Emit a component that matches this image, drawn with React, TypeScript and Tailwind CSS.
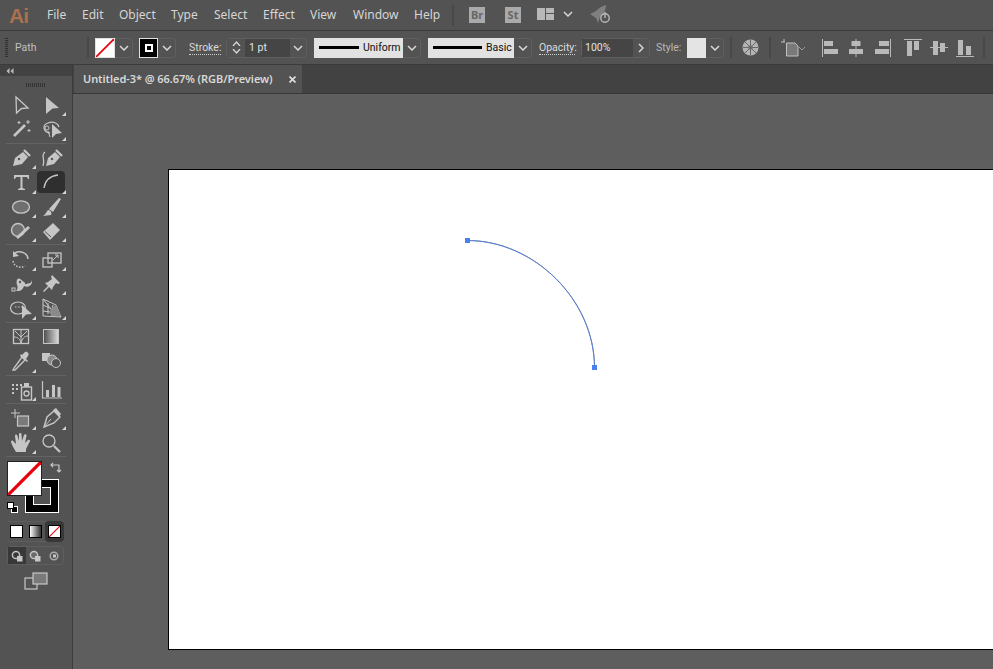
const menus = ["File", "Edit", "Object", "Type", "Select", "Effect", "View", "Window", "Help"]

const Chevron = ({ color = "#d8d8d8" }: { color?: string }) => (
  <svg width="10" height="6" viewBox="0 0 10 6" fill="none" stroke={color} strokeWidth="1.5">
    <path d="M1 1 L5 5 L9 1" />
  </svg>
)

const Drop = ({ w = "w-[18px]" }: { w?: string }) => (
  <div className={`h-[20px] ${w} flex items-center justify-center border border-l-0 border-[#5f5f5f] rounded-r-sm bg-[#535353]`}>
    <Chevron />
  </div>
)

const Sep = ({ className = "" }: { className?: string }) => (
  <div className={`w-[2px] h-[21px] bg-[#484848] ${className}`} />
)

const Line = ({ w }: { w: string }) => <div className={`${w} h-[3px] bg-black`} />

const c = "#c6c6c6"

const Tool = ({ active, corner = true, children }: { active?: boolean; corner?: boolean; children: React.ReactNode }) => (
  <div className="relative w-[30px] h-[24.4px]">
    {active && <div className="absolute left-0 top-[1px] w-[28px] h-[22px] rounded-sm bg-[#2f2f2f]" />}
    <svg width="30" height="24" viewBox="0 0 30 24" fill="none" className="block relative">{children}</svg>
    {corner && (
      <svg width="4" height="4" viewBox="0 0 4 4" className="absolute right-[1px] bottom-[1px]">
        <path d="M4 0 L4 4 L0 4 Z" fill="#d4d4d4" />
      </svg>
    )}
  </div>
)

const toolGroups: { icon: React.ReactNode; active?: boolean; corner?: boolean }[][] = [
  [
    { corner: false, icon: <path d="M9 4 L21 15 L14.5 15.5 L9.5 20 Z" stroke={c} strokeWidth="1.3" /> },
    { icon: <path d="M9 4 L22 15 L15.5 15.5 L9 21 Z" fill={c} /> },
    { corner: false, icon: <><path d="M7 19 L18 8" stroke={c} strokeWidth="2.6" /><path d="M21 3 v4 M19 5 h4 M12 4 v3 M10.5 5.5 h3 M22 12 v3 M20.5 13.5 h3" stroke={c} /></> },
    { icon: <><path d="M13 16 C6 15 5 8 11 6 C16 4 21 6 22 10" stroke={c} strokeWidth="1.3" /><path d="M15 7 L25 16 L19 17 L15 21 Z" fill={c} /><circle cx="10" cy="11" r="2" stroke={c} /><path d="M11 14 L13 20" stroke={c} /></> },
  ],
  [
    { icon: <><path d="M6 20 L8 12 L16 6 L21 11 L15 18 Z" fill={c} /><path d="M17 4 L23 10" stroke={c} strokeWidth="2.4" /><circle cx="12" cy="13" r="1.2" fill="#535353" /></> },
    { corner: false, icon: <><path d="M9 20 L11 12 L18 6 L23 11 L17 18 Z" fill={c} /><path d="M19 4 L25 10" stroke={c} strokeWidth="2.4" /><path d="M8 6 C3 10 9 13 6 20 " stroke={c} strokeWidth="1.3" /><circle cx="15" cy="13" r="1.2" fill="#535353" /></> },
    { icon: <path d="M7 5 H22 V9 H21 L20 7 H15.5 V18 L18 19 V20 H11 V19 L13.5 18 V7 H9 L8 9 H7 Z" fill={c} /> },
    { active: true, icon: <path d="M7 18 C8 11 13 6 21 5" stroke={c} strokeWidth="1.3" /> },
    { icon: <ellipse cx="14" cy="12" rx="8.5" ry="6.2" fill="#6f6f6f" stroke={c} strokeWidth="1.3" /> },
    { icon: <><path d="M12 14 L22 3 L24 4 L16 17 Z" fill={c} /><path d="M11 15 C14 15 15 18 14 20 L6 21 C9 19 9 17 11 15 Z" fill={c} /></> },
    { icon: <><circle cx="11" cy="11" r="6.5" fill="#6f6f6f" stroke={c} strokeWidth="1.4" /><path d="M10 19 L22 8" stroke={c} strokeWidth="3" /></> },
    { icon: <><path d="M6 13 L16 4 L23 11 L13 21 Z" fill={c} /><path d="M8 12.5 L14 18" stroke="#535353" /></> },
  ],
  [
    { icon: <><path d="M8 5 C13 2 21 5 21 11" stroke={c} strokeWidth="1.5" /><path d="M6 3 L6 9 L12 8 Z" fill={c} /><path d="M6 13 C7 18 12 21 18 18" stroke={c} strokeWidth="1.5" strokeDasharray="1.5 1.5" /></> },
    { icon: <><rect x="6" y="10" width="9" height="9" stroke={c} strokeWidth="1.3" /><rect x="11" y="5" width="13" height="10" stroke={c} strokeWidth="1.3" /><path d="M16 12 L21 7 M18 7 H21 V10" stroke={c} /></> },
    { icon: <><path d="M9 19 C13 15 8 12 10 8 C12 4 15 9 17 10 C21 13 25 11 25 8 C26 14 20 16 17 14 C15 19 13 19 9 19 Z" fill={c} /><rect x="5" y="16" width="3" height="3" stroke={c} /><circle cx="13" cy="10" r="1.2" fill="#535353" /><circle cx="19" cy="11" r="1.2" fill="#535353" /></> },
    { icon: <><path d="M15 3 L23 11 L21 12 L19 11 L16 15 L15 18 L12 15 L7 20 L6 19 L11 14 L8 11 L11 10 L15 7 L14 5 Z" fill={c} /></> },
    { icon: <><ellipse cx="11" cy="12" rx="7.5" ry="6" stroke={c} strokeWidth="1.2" /><path d="M8 11 h7" stroke={c} strokeDasharray="1.5 1.5" /><path d="M15 9 L25 18 L19 18.5 L15 23 Z" fill={c} /></> },
    { icon: <><path d="M6 3 V20 L24 21 L14 13 Z M6 3 L19 9 L24 21 M6 9 L15 13 M6 15 L20 17 M11 7 V18 M16 9 L14 18" stroke={c} strokeWidth="1" /><path d="M13 13 L19 9 L24 20 L14 20 Z" fill="#8a8a8a" /></> },
  ],
  [
    { corner: false, icon: <><rect x="6.5" y="4.5" width="15" height="14" stroke={c} strokeWidth="1.3" /><path d="M7 12 C11 12 13 14 14 18 M21 11 C17 11 15 14 14 18 M14 18 V5 M8 6 C10 8 12 10 14 12 M20 6 C18 8 16 10 14 12" stroke={c} /></> },
    { corner: false, icon: <><defs><linearGradient id="grad"><stop offset="0" stopColor="#4c4c4c" /><stop offset="1" stopColor="#dcdcdc" /></linearGradient></defs><rect x="6.5" y="4.5" width="15" height="14" fill="url(#grad)" stroke={c} strokeWidth="1" /></> },
    { icon: <><path d="M7 19 L6 21 L8 21 L18 11 L15 8 Z" stroke={c} strokeWidth="1.4" /><path d="M15 6 L18 3 C20 2 23 5 21 7 L19 10 L21 12 L20 13 L13 7 L14 5 Z" fill={c} /></> },
    { corner: false, icon: <><rect x="5" y="4" width="8" height="8" fill={c} /><circle cx="15" cy="11" r="5" fill="#8a8a8a" stroke={c} /><circle cx="19" cy="14" r="4.5" fill="#535353" stroke={c} /></> },
  ],
  [
    { icon: <><path d="M5 6 h2 v2 h-2 z M9 6 h2 v2 h-2 z M13 6 h2 v2 h-2 z M5 10 h2 v2 h-2 z M9 10 h2 v2 h-2 z M5 14 h2 v2 h-2 z" fill={c} /><rect x="14.5" y="9" width="10" height="13" fill="#535353" stroke={c} strokeWidth="1.4" /><rect x="17" y="5" width="5" height="4" fill={c} /><circle cx="19.5" cy="15.5" r="2.5" stroke={c} strokeWidth="1.3" /></> },
    { corner: false, icon: <><path d="M5.5 3 V20 H25" stroke={c} strokeWidth="1.2" /><path d="M9 12 h3 v7 h-3 z M15 7 h3 v12 h-3 z M20.5 9 h3 v10 h-3 z" fill={c} /></> },
  ],
  [
    { icon: <><rect x="10.5" y="10" width="11" height="10" fill="#7a7a7a" stroke={c} strokeWidth="1.2" /><path d="M4 7 H13 M8 3 V12" stroke={c} strokeWidth="1" /></> },
    { icon: <><path d="M7 21 L10 11 L17 5 L23 11 L17 17 Z" stroke={c} strokeWidth="1.4" /><path d="M16 4 L19 2 L24 8 L22 11 Z" fill={c} /><path d="M7 21 L14 13" stroke={c} /></> },
    { icon: <path d="M9 21 C7 18 5 14 4 11 C4 9 6 9 7 11 L9 13 L8 5 C8 3 10 3 10.5 5 L12 10 L12 3 C12 1.5 14.5 1.5 14.5 3 L15 10 L17 4 C17.5 2.5 20 3 19.5 5 L18 12 L21 9 C23 8 24 10 22 12 L19 18 V21 Z" fill={c} /> },
    { corner: false, icon: <><circle cx="12" cy="10" r="6" stroke={c} strokeWidth="1.3" /><path d="M17 15 L23 21" stroke={c} strokeWidth="2.2" /></> },
  ],
]

const Swatch = () => (
  <svg width="100%" height="100%" viewBox="0 0 20 20" preserveAspectRatio="none" className="block">
    <rect width="20" height="20" fill="#fff" />
    <path d="M0 20 L20 0" stroke="#e8000d" strokeWidth="2" />
  </svg>
)

const Toolbar = () => (
  <div className="w-[73px] shrink-0 bg-[#535353] border-r border-[#3c3c3c] flex flex-col">
    <div className="h-[11px] bg-[#424242] flex items-center pl-[6px]">
      <svg width="8" height="6" viewBox="0 0 8 6"><path d="M3.5 0 L0.5 3 L3.5 6 Z M7.5 0 L4.5 3 L7.5 6 Z" fill="#bcbcbc" /></svg>
    </div>
    <div className="h-[17px] flex items-center justify-center pr-[2px]">
      <div className="w-[19px] h-[4px] bg-[repeating-linear-gradient(90deg,#333_0,#333_1px,transparent_1px,transparent_2px)]" />
    </div>
    {toolGroups.map((group, i) => (
      <div key={i} className="border-b border-[#636363] mx-[6px] pb-[1px] mb-[2.1px]">
        <div className="grid grid-cols-[30px_30px] ml-[1px]">
          {group.map((t, j) => (
            <Tool key={j} active={t.active} corner={t.corner !== false}>{t.icon}</Tool>
          ))}
        </div>
      </div>
    ))}

    {/* fill + stroke */}
    <div className="relative h-[60px] mx-[7px] mt-[2px]">
      <div className="absolute left-[18px] top-[18px] w-[34px] h-[34px] bg-black border border-white flex items-center justify-center">
        <div className="w-[18px] h-[18px] bg-[#535353] border border-white" />
      </div>
      <div className="absolute left-0 top-0 w-[35px] h-[35px] border border-[#222]">
        <Swatch />
      </div>
      <svg width="12" height="12" viewBox="0 0 12 12" fill="none" stroke="#c6c6c6" strokeWidth="1.2" className="absolute left-[43px] top-[1px]">
        <path d="M1 3 H9 V10 M3 1 L1 3 L3 5 M7 8 L9 10 L11 8" />
      </svg>
      <div className="absolute left-0 top-[41px] w-[11px] h-[11px]">
        <div className="absolute left-[4px] top-[4px] w-[7px] h-[7px] bg-black border border-white" />
        <div className="absolute left-0 top-0 w-[7px] h-[7px] bg-white border border-black" />
      </div>
    </div>

    <div className="ml-[7px] w-[57px] h-[21px] border-y border-[#5e5e5e] flex items-center">
      <div className="w-[19px] flex justify-center"><div className="w-[13px] h-[13px] bg-white border border-black" /></div>
      <div className="w-[19px] flex justify-center"><div className="w-[13px] h-[13px] border border-black bg-gradient-to-r from-white to-[#333]" /></div>
      <div className="w-[19px] h-[21px] rounded-sm bg-[#383838] flex items-center justify-center">
        <div className="w-[13px] h-[13px] border border-black"><Swatch /></div>
      </div>
    </div>

    <div className="ml-[7px] w-[57px] mt-[4px] h-[19px] flex border border-[#5e5e5e] rounded-sm">
      <div className="w-[19px] bg-[#383838] flex items-center justify-center">
        <svg width="12" height="12" viewBox="0 0 12 12"><circle cx="5" cy="5" r="3.6" fill="none" stroke="#c6c6c6" strokeWidth="1.5" /><rect x="6" y="6" width="5.5" height="5.5" fill="#c6c6c6" /></svg>
      </div>
      <div className="w-[19px] flex items-center justify-center">
        <svg width="12" height="12" viewBox="0 0 12 12"><circle cx="5" cy="5" r="3.6" fill="#6a6a6a" stroke="#c6c6c6" strokeWidth="1.5" /><rect x="6" y="6" width="5.5" height="5.5" fill="#c6c6c6" /></svg>
      </div>
      <div className="w-[19px] flex items-center justify-center">
        <svg width="12" height="12" viewBox="0 0 12 12"><circle cx="6" cy="6" r="3.8" fill="none" stroke="#aaa" strokeWidth="1.5" /><rect x="5" y="4.5" width="3" height="3" fill="#c6c6c6" /></svg>
      </div>
    </div>

    <div className="flex justify-center mt-[7px] pr-[1px]">
      <svg width="24" height="18" viewBox="0 0 24 18" fill="none" stroke="#c6c6c6" strokeWidth="1.2">
        <rect x="1" y="6" width="12" height="11" />
        <rect x="9" y="1" width="14" height="11" fill="#7a7a7a" />
      </svg>
    </div>
  </div>
)

const AlignIcon = ({ children, w = 18, className = "" }: { children: React.ReactNode; w?: number; className?: string }) => (
  <svg width={w} height="18" viewBox={`0 0 ${w} 18`} fill="#b9b9b9" className={`block shrink-0 ${className}`}>{children}</svg>
)

const ControlBar = () => (
  <div className="h-[35px] shrink-0 bg-[#535353] border-y border-[#3b3b3b] flex items-center text-[10.5px] text-[#cfcfcf] font-['Roboto',sans-serif] [&>*]:shrink-0">
    <div className="ml-[5px] w-[3px] h-[19px] bg-[repeating-linear-gradient(180deg,#2f2f2f_0,#2f2f2f_1px,transparent_1px,transparent_2px)]" />
    <span className="ml-[7px] w-[72px] text-[#c0c0c0]">Path</span>
    <Sep />
    <div className="ml-[6px] w-[20px] h-[20px] border border-[#e0e0e0]"><Swatch /></div>
    <Drop />
    <div className="ml-[6px] w-[19px] h-[20px] bg-black border border-[#e0e0e0] flex items-center justify-center">
      <div className="w-[8px] h-[8px] border-2 border-white" />
    </div>
    <Drop />
    <span className="ml-[13px] w-[32px] border-b border-dotted border-[#d0d0d0] leading-[13px] text-[#d8d8d8] whitespace-nowrap">Stroke:</span>
    <div className="ml-[5px] h-[20px] w-[81px] flex border border-[#5f5f5f] rounded-sm">
      <div className="w-[18px] flex flex-col items-center justify-center gap-[3px] bg-[#535353]">
        <svg width="9" height="5" viewBox="0 0 9 5" fill="none" stroke="#d8d8d8" strokeWidth="1.3"><path d="M1 5 L4.5 1 L8 5" /></svg>
        <svg width="9" height="5" viewBox="0 0 9 5" fill="none" stroke="#d8d8d8" strokeWidth="1.3"><path d="M1 0 L4.5 4 L8 0" /></svg>
      </div>
      <div className="w-[45px] bg-[#454545] pl-[4px] leading-[18px] text-[#e2e2e2]">1 pt</div>
      <div className="flex-1 flex items-center justify-center"><Chevron /></div>
    </div>
    <div className="ml-[7px] w-[89px] h-[20px] bg-[#e2e2e2] flex items-center pl-[5px] text-[#111]">
      <Line w="w-[40px]" />
      <span className="ml-[4px]">Uniform</span>
    </div>
    <Drop />
    <div className="ml-[7px] w-[86px] h-[20px] bg-[#e2e2e2] flex items-center pl-[5px] text-[#111]">
      <Line w="w-[49px]" />
      <span className="ml-[4px]">Basic</span>
    </div>
    <Drop />
    <span className="ml-[7px] w-[36px] border-b border-dotted border-[#d0d0d0] leading-[13px] text-[#dcdcdc] whitespace-nowrap">Opacity:</span>
    <div className="ml-[6px] h-[20px] w-[69px] flex border border-[#5f5f5f] rounded-sm">
      <div className="w-[51px] bg-[#454545] pl-[3px] leading-[18px] text-[#e2e2e2]">100%</div>
      <div className="flex-1 flex items-center justify-center">
        <svg width="6" height="10" viewBox="0 0 6 10" fill="none" stroke="#d8d8d8" strokeWidth="1.5"><path d="M1 1 L5 5 L1 9" /></svg>
      </div>
    </div>
    <span className="ml-[6px] w-[25px] text-[#b8b8b8]">Style:</span>
    <div className="ml-[6px] w-[19px] h-[20px] bg-[#e4e4e4]" />
    <Drop />
    <Sep className="ml-[6px]" />
    <svg width="17" height="17" viewBox="0 0 17 17" fill="none" className="ml-[10px]">
      <circle cx="8.5" cy="8.5" r="8" fill="#b4b4b4" />
      <circle cx="8.5" cy="8.5" r="2.5" fill="#8a8a8a" />
      <path d="M8.5 1 V16 M1 8.5 H16 M3 3 L14 14 M14 3 L3 14" stroke="#6a6a6a" />
    </svg>
    <Sep className="ml-[10px]" />
    <svg width="25" height="18" viewBox="0 0 25 18" fill="none" className="ml-[10px]">
      <path d="M5.5 4 H14 L17 7 V17 H5.5 Z" fill="#7a7a7a" stroke="#c0c0c0" />
      <path d="M0 3 H4 M3 0 V3" stroke="#c0c0c0" />
      <path d="M18 8 L21 11 L24 8" stroke="#999" />
    </svg>
    <AlignIcon w={16} className="ml-[16px]"><rect x="0" y="0" width="1" height="18" /><rect x="2" y="2" width="9" height="5" /><rect x="2" y="10" width="14" height="5" /></AlignIcon>
    <AlignIcon w={14} className="ml-[11px]"><rect x="6.5" y="0" width="1" height="18" /><rect x="2.5" y="2" width="9" height="5" /><rect x="0" y="10" width="14" height="5" /></AlignIcon>
    <AlignIcon w={16} className="ml-[12px]"><rect x="15" y="0" width="1" height="18" /><rect x="4" y="2" width="10" height="5" /><rect x="0" y="10" width="14" height="5" /></AlignIcon>
    <AlignIcon w={18} className="ml-[13px]"><rect x="0" y="0" width="18" height="1" /><rect x="3" y="2" width="5" height="15" /><rect x="10" y="2" width="5" height="9" /></AlignIcon>
    <AlignIcon w={18} className="ml-[8px]"><rect x="0" y="8" width="18" height="1" /><rect x="3" y="2" width="5" height="14" /><rect x="10" y="4" width="5" height="9" /></AlignIcon>
    <AlignIcon w={18} className="ml-[8px]"><rect x="0" y="17" width="18" height="1" /><rect x="2" y="1" width="5" height="15" /><rect x="10" y="7" width="5" height="9" /></AlignIcon>
    <Sep className="ml-[9px]" />
  </div>
)

const MenuBar = () => (
  <div className="h-[30px] shrink-0 bg-[#535353] flex items-center text-[12px] text-[#d6d6d6]">
    <span className="ml-[9px] w-[38px] text-[21px] leading-none font-bold tracking-[-1px] text-[#a9714f] font-['Liberation_Sans',sans-serif]">Ai</span>
    <div className="flex">
      {menus.map((m, i) => (
        <span key={m} className={["w-[35px]", "w-[37px]", "w-[52px]", "w-[43px]", "w-[49px]", "w-[47px]", "w-[43px]", "w-[61px]", "w-[38px]"][i]}>{m}</span>
      ))}
    </div>
    <Sep />
    <div className="ml-[15px] w-[16px] h-[16px] bg-[#aaa] text-[11px] font-bold text-[#666] flex items-center justify-center">Br</div>
    <div className="ml-[20px] w-[16px] h-[16px] bg-[#aaa] text-[11px] font-bold text-[#666] flex items-center justify-center">St</div>
    <svg width="18" height="12" viewBox="0 0 18 12" fill="#b8b8b8" className="ml-[16px] mb-[3px]">
      <rect width="8" height="12" /><rect x="9" width="8" height="5" /><rect x="9" y="6" width="8" height="6" />
    </svg>
    <div className="ml-[8px] mb-[3px]"><Chevron /></div>
    <svg width="24" height="20" viewBox="0 0 24 20" fill="none" className="ml-[16px]">
      <path d="M1 9 L7 6 C10 3 13 1 17 0 C17 6 14 9 11 12 L9 18 L7 13 L4 11 Z" fill="#7f7f7f" />
      <circle cx="16" cy="13" r="4.2" fill="#535353" stroke="#b8b8b8" strokeWidth="1.4" />
      <path d="M16 7 V13" stroke="#b8b8b8" strokeWidth="1.4" />
    </svg>
  </div>
)

const TabStrip = () => (
  <div className="h-[29px] shrink-0 bg-[#424242] border-b border-[#383838] flex pl-[1px]">
    <div className="w-[228px] bg-[#535353] flex items-center pl-[9px] pr-[6px] justify-between text-[11px] font-semibold tracking-[-0.06px] text-[#d8d8d8]">
      <span>Untitled-3* @ 66.67% (RGB/Preview)</span>
      <svg width="7" height="7" viewBox="0 0 7 7" stroke="#e0e0e0" strokeWidth="1.6"><path d="M0.5 0.5 L6.5 6.5 M6.5 0.5 L0.5 6.5" /></svg>
    </div>
  </div>
)

export default function App() {
  return (
    <div className="w-[993px] h-[669px] overflow-hidden flex flex-col bg-[#5e5e5e] font-['Noto_Sans',sans-serif]">
      <MenuBar />
      <ControlBar />
      <div className="flex flex-1 min-h-0">
        <Toolbar />
        <div className="flex-1 min-w-0 flex flex-col">
          <TabStrip />
          <div className="flex-1 pt-[75px] pl-[95px] bg-[#5e5e5e] overflow-hidden">
            {/* artboard runs off the right edge */}
            <div className="w-[840px] h-[481px] bg-white border border-black">
              <svg width="838" height="479" viewBox="0 0 838 479" fill="none" className="block">
                <path d="M298.5 70.5 C365 70.5 425.5 130 425.5 197.5" stroke="#222" strokeWidth="1" opacity="0.6" />
                <path d="M298.5 70.5 C365 70.5 425.5 130 425.5 197.5" stroke="#4a7ff0" strokeWidth="0.8" />
                <rect x="296" y="68" width="5" height="5" fill="#4a7ff0" />
                <rect x="423" y="195" width="5" height="5" fill="#4a7ff0" />
              </svg>
            </div>
          </div>
        </div>
      </div>
    </div>
  )
}
